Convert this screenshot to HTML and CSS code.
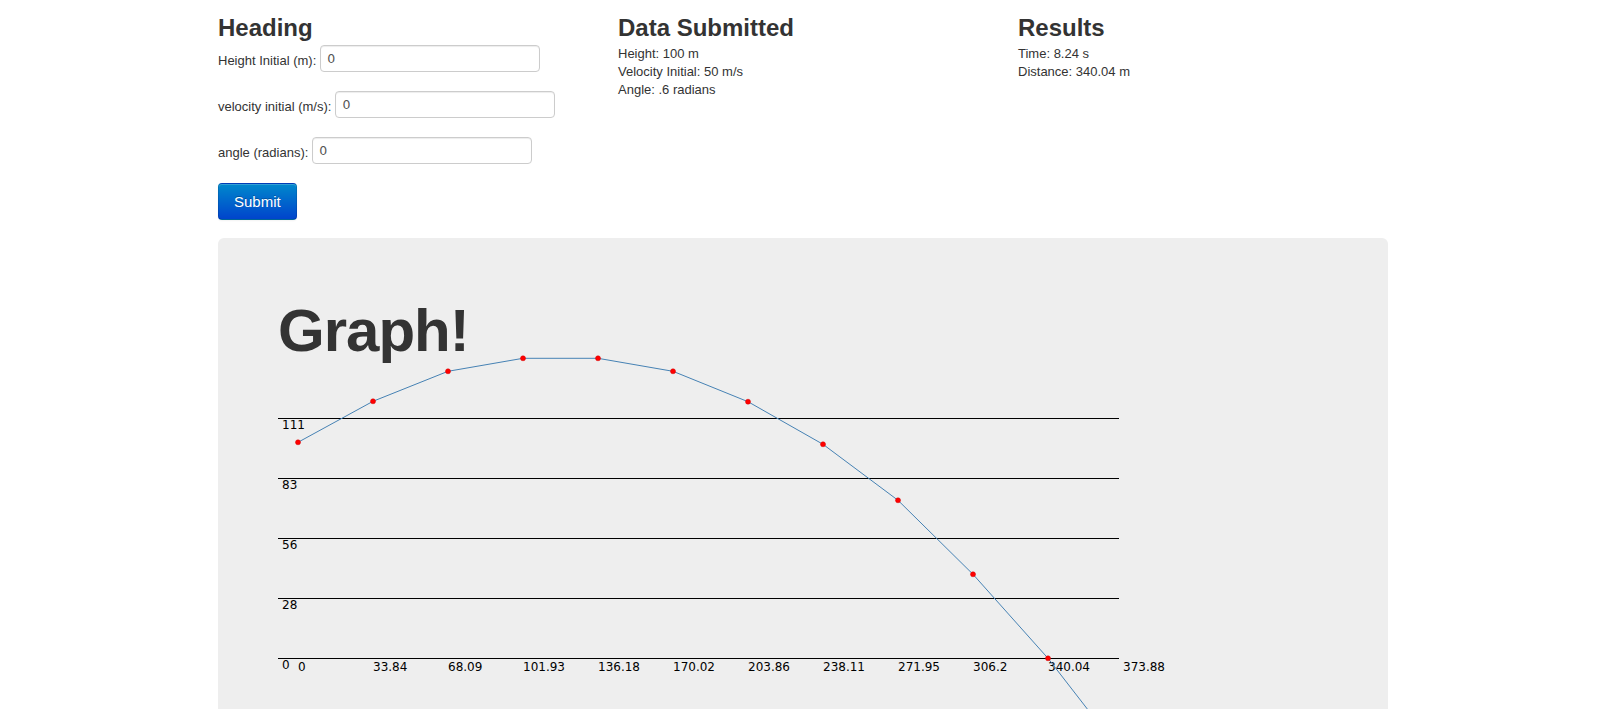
FILE: index.html
```html
<!DOCTYPE html>
<html>
<head>
<meta charset="utf-8">
<title>Projectile</title>
<link rel="stylesheet" href="styles.css">
</head>
<body>
<div class="container">
  <div class="row">
    <div class="span4">
      <h3 class="col-title">Heading</h3>
      <form class="form">
        <div class="field">
          <label>Height Initial (m):</label>
          <input type="text" value="0">
        </div>
        <div class="field">
          <label>velocity initial (m/s):</label>
          <input type="text" value="0">
        </div>
        <div class="field">
          <label>angle (radians):</label>
          <input type="text" value="0">
        </div>
        <button type="button" class="btn-primary">Submit</button>
      </form>
    </div>
    <div class="span4">
      <h3 class="col-title">Data Submitted</h3>
      <div class="info">
        <div>Height: 100 m</div>
        <div>Velocity Initial: 50 m/s</div>
        <div>Angle: .6 radians</div>
      </div>
    </div>
    <div class="span4">
      <h3 class="col-title">Results</h3>
      <div class="info">
        <div>Time: 8.24 s</div>
        <div>Distance: 340.04 m</div>
      </div>
    </div>
  </div>

  <div class="hero">
    <h1 class="hero-title">Graph!</h1>
    <svg class="chart" width="1050" height="420" viewBox="0 0 1050 420">
      <g class="grid">
        <line x1="0" y1="58.5" x2="841" y2="58.5"/>
        <line x1="0" y1="118.5" x2="841" y2="118.5"/>
        <line x1="0" y1="178.5" x2="841" y2="178.5"/>
        <line x1="0" y1="238.5" x2="841" y2="238.5"/>
        <line x1="0" y1="298.5" x2="841" y2="298.5"/>
      </g>
      <g class="ylabels">
        <text x="4" y="69">111</text>
        <text x="4" y="129">83</text>
        <text x="4" y="189">56</text>
        <text x="4" y="249">28</text>
        <text x="4" y="309">0</text>
      </g>
      <g class="xlabels">
        <text x="20" y="310.5">0</text>
        <text x="95" y="310.5">33.84</text>
        <text x="170" y="310.5">68.09</text>
        <text x="245" y="310.5">101.93</text>
        <text x="320" y="310.5">136.18</text>
        <text x="395" y="310.5">170.02</text>
        <text x="470" y="310.5">203.86</text>
        <text x="545" y="310.5">238.11</text>
        <text x="620" y="310.5">271.95</text>
        <text x="695" y="310.5">306.2</text>
        <text x="770" y="310.5">340.04</text>
        <text x="845" y="310.5">373.88</text>
      </g>
      <polyline class="curve" points="20,82.3 95,41.3 170,11.3 245,-1.7 320,-1.7 395,11.3 470,41.7 545,84.3 620,140.3 695,214.3 770,298.3 845,395"/>
      <g class="dots">
        <circle cx="20" cy="82.3" r="2.5"/>
        <circle cx="95" cy="41.3" r="2.5"/>
        <circle cx="170" cy="11.3" r="2.5"/>
        <circle cx="245" cy="-1.7" r="2.5"/>
        <circle cx="320" cy="-1.7" r="2.5"/>
        <circle cx="395" cy="11.3" r="2.5"/>
        <circle cx="470" cy="41.7" r="2.5"/>
        <circle cx="545" cy="84.3" r="2.5"/>
        <circle cx="620" cy="140.3" r="2.5"/>
        <circle cx="695" cy="214.3" r="2.5"/>
        <circle cx="770" cy="298.3" r="2.5"/>
        <circle cx="845" cy="395" r="2.5"/>
      </g>
    </svg>
  </div>
</div>
</body>
</html>
```

FILE: styles.css
```css
html {
  overflow: hidden;
  background: #fff;
}

body {
  margin: 0;
  padding-right: 12px;
  font-family: "Liberation Sans", Arial, sans-serif;
  font-size: 13px;
  line-height: 18px;
  color: #333;
}

.container {
  width: 1170px;
  margin: 0 auto;
}

.row {
  display: flex;
  gap: 30px;
}

.span4 {
  width: 370px;
}

.col-title {
  margin: 13px 0 2px;
  font-size: 24px;
  line-height: 30px;
  font-weight: bold;
  color: #333;
}

.info div {
  line-height: 18px;
}

.form {
  margin: 0;
}

.field {
  display: flex;
  align-items: center;
  gap: 4px;
  margin-bottom: 19px;
}

.field label {
  padding-top: 5px;
  font-size: 13px;
  line-height: 18px;
  color: #333;
}

.field input {
  box-sizing: border-box;
  width: 220px;
  height: 27px;
  margin: 0;
  padding: 4px 6px;
  border: 1px solid #ccc;
  border-radius: 4px;
  background: #fff;
  box-shadow: inset 0 1px 1px rgba(0, 0, 0, 0.075);
  font-family: "DejaVu Sans", Verdana, sans-serif;
  font-size: 12.5px;
  color: #555;
  outline: none;
}

.btn-primary {
  display: block;
  margin: 0;
  padding: 8px 15px;
  font-family: "Liberation Sans", Arial, sans-serif;
  font-size: 15px;
  line-height: 19px;
  color: #fff;
  text-shadow: 0 -1px 0 rgba(0, 0, 0, 0.25);
  background: linear-gradient(to bottom, #0088cc, #0044cc);
  border: 1px solid;
  border-color: rgba(0, 0, 0, 0.1) rgba(0, 0, 0, 0.1) rgba(0, 0, 0, 0.25);
  border-radius: 4px;
  box-shadow: inset 0 1px 0 rgba(255, 255, 255, 0.2), 0 1px 2px rgba(0, 0, 0, 0.05);
  cursor: pointer;
}

.hero {
  margin-top: 18px;
  padding: 60px;
  background: #eeeeee;
  border-radius: 6px;
}

.hero-title {
  margin: 4px 0 0;
  font-size: 60px;
  line-height: 58px;
  font-weight: bold;
  letter-spacing: -1px;
  color: #333;
}

.chart {
  display: block;
  overflow: visible;
}

.grid line {
  stroke: #000;
  stroke-width: 1;
  shape-rendering: crispEdges;
}

.ylabels text,
.xlabels text {
  font-family: "DejaVu Sans", Verdana, sans-serif;
  font-size: 12px;
  fill: #000;
}

.curve {
  fill: none;
  stroke: steelblue;
  stroke-width: 1;
}

.dots circle {
  fill: #ff0000;
  stroke: #d40000;
  stroke-width: 0.5;
}
```
